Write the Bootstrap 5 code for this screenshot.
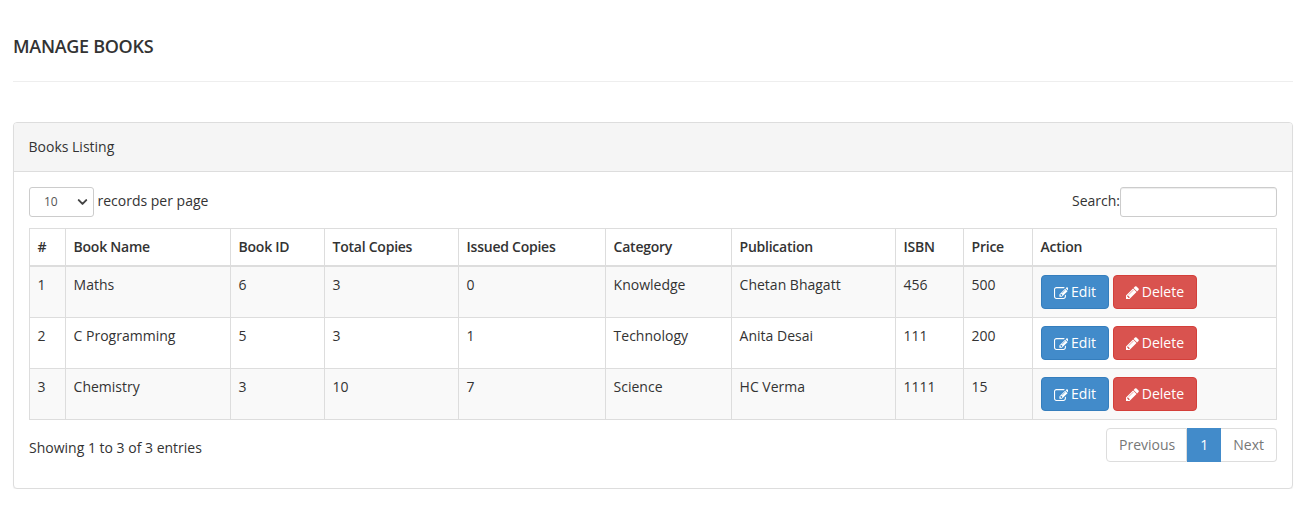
<!DOCTYPE html>
<html lang="en">
<head>
<meta charset="utf-8">
<title>Manage Books</title>
<link rel="stylesheet" href="https://cdn.jsdelivr.net/npm/bootstrap@5.3.0/dist/css/bootstrap.min.css">
<style>
body{font-family:"Open Sans",sans-serif;font-size:14px;line-height:20px;color:#333;background:#fff}
.page-wrap{padding:0 16px 0 13px}
.page-head{height:82px;border-bottom:1px solid #eee;margin:0 0 40px;display:flex;align-items:flex-start}
.page-head h1{font-size:18px;line-height:20px;font-weight:600;letter-spacing:-.3px;font-family:"Open Sans",sans-serif;margin:36px 0 0;color:#333}
.books-panel{border:1px solid #ddd;border-radius:4px;box-shadow:0 1px 1px rgba(0,0,0,.05);background:#fff}
.books-head{height:49px;padding:14px 14.5px;background:#f5f5f5;border-bottom:1px solid #ddd;border-radius:3px 3px 0 0}
.books-body{padding:15px 15px 26px}
.len-select{width:65px;height:30px;font-size:12px;line-height:18px;color:#555;padding:5px 10px 5px 14px;border:1px solid #ccc;border-radius:3px;background-image:url("data:image/svg+xml,%3csvg xmlns='http://www.w3.org/2000/svg' viewBox='0 0 16 16'%3e%3cpath fill='none' stroke='%23444' stroke-linecap='round' stroke-linejoin='round' stroke-width='3.2' d='m2 5 6 6 6-6'/%3e%3c/svg%3e");background-position:right 5px center;background-size:11px 10px}
.len-label{margin-left:3.5px;position:relative;top:-1px}
.search-label{position:relative;top:-1px}
.search-box{width:157px;height:30px;border:1px solid #ccc;border-radius:3px;padding:5px 10px;font-size:12px;box-shadow:inset 0 1px 1px rgba(0,0,0,.075)}
.tool-row{margin-bottom:11px}
.books-table{table-layout:fixed;width:100%;margin:0;border-color:#ddd;color:#333;--bs-table-striped-bg:#f9f9f9;--bs-table-striped-color:#333;--bs-table-color:#333;--bs-table-border-color:#ddd}
.books-table th{padding:8px 8px 8px 7.6px;font-weight:600;letter-spacing:-.25px;line-height:20px;border-bottom:2px solid #ddd;color:#333}
.books-table td{padding:8px 8px 8px 7.6px;line-height:20px;vertical-align:top;color:#333}
.books-table td.act-cell{padding-left:8px}
.books-table thead{border-bottom:0}
.books-table>tbody{border-top:0}
.c1{width:36px}.c2{width:165px}.c3{width:94px}.c4{width:134px}.c5{width:147px}.c6{width:126px}.c7{width:164px}.c8{width:68px}.c9{width:69px}
.act-btn{display:inline-flex;align-items:center;height:34px;padding:0 12px;font-size:14px;line-height:20px;color:#fff;border-radius:4px;border:1px solid;text-decoration:none}
.act-btn:hover{color:#fff}
.act-edit{background:#428bca;border-color:#357ebd;margin-right:4px}
.act-del{background:#d9534f;border-color:#d43f3a}
.act-btn svg{fill:#fff;height:13px;width:auto;margin-right:3px}
.pager-list{display:flex;list-style:none;margin:0;padding:0}
.pager-list a{display:block;height:34px;padding:6px 12px;border:1px solid #ddd;border-left:0;color:#777;background:#fff;text-decoration:none;line-height:20px}
.pager-list li:first-child a{border-left:1px solid #ddd;border-radius:4px 0 0 4px;padding:6px 11px 6px 12px}
.pager-list li:last-child a{border-radius:0 4px 4px 0}
.pager-list li.on a{background:#428bca;border-color:#428bca;color:#fff;padding:6px 12px 6px 13px}
.foot-row{margin-top:8px}
.info-text{padding-top:10px}
</style>
</head>
<body>
<div class="page-wrap">
  <div class="page-head"><h1>MANAGE BOOKS</h1></div>
  <div class="books-panel">
    <div class="books-head">Books Listing</div>
    <div class="books-body">
      <div class="d-flex justify-content-between align-items-center tool-row">
        <div class="d-flex align-items-center">
          <select class="form-select len-select"><option>10</option><option>25</option><option>50</option></select>
          <span class="len-label">records per page</span>
        </div>
        <div class="d-flex align-items-center">
          <label for="q" class="search-label">Search:</label>
          <input id="q" type="search" class="search-box">
        </div>
      </div>
      <table class="table table-bordered table-striped books-table">
        <colgroup><col class="c1"><col class="c2"><col class="c3"><col class="c4"><col class="c5"><col class="c6"><col class="c7"><col class="c8"><col class="c9"><col></colgroup>
        <thead>
          <tr><th>#</th><th>Book Name</th><th>Book ID</th><th>Total Copies</th><th>Issued Copies</th><th>Category</th><th>Publication</th><th>ISBN</th><th>Price</th><th>Action</th></tr>
        </thead>
        <tbody>
          <tr><td>1</td><td>Maths</td><td>6</td><td>3</td><td>0</td><td>Knowledge</td><td>Chetan Bhagatt</td><td>456</td><td>500</td>
            <td class="act-cell"><a href="#" class="act-btn act-edit"><svg viewBox="0 0 1664 1536"><path d="M888 1184l116-116-152-152-116 116v56h96v96h56zm440-720q-16-16-33 1L945 815q-17 17-1 33t33-1l350-350q17-17 1-33zm80 594v190q0 119-84.500 203.500T1120 1536H288q-119 0-203.500-84.500T0 1248V416q0-119 84.500-203.500T288 128h832q63 0 117 25 15 7 18 23 3 17-9 29l-49 49q-14 14-32 8-23-6-45-6H288q-66 0-113 47t-47 113v832q0 66 47 113t113 47h832q66 0 113-47t47-113V1122q0-13 9-22l64-64q15-15 35-7t20 29zm-96-738l288 288-672 672H640V992zm444 132l-92 92-288-288 92-92q28-28 68-28t68 28l152 152q28 28 28 68t-28 68z"/></svg>Edit</a><a href="#" class="act-btn act-del"><svg viewBox="0 0 1515 1536"><path d="M363 1408l91-91-235-235-91 91v107h128v128h107zm523-928q0-22-22-22-10 0-17 7L305 1007q-7 7-7 17 0 22 22 22 10 0 17-7l542-542q7-7 7-17zm-54-192l416 416-832 832H0v-416zm683 96q0 53-37 90l-166 166-416-416 166-165q36-38 90-38 53 0 91 38l235 234q37 39 37 91z"/></svg>Delete</a></td></tr>
          <tr><td>2</td><td>C Programming</td><td>5</td><td>3</td><td>1</td><td>Technology</td><td>Anita Desai</td><td>111</td><td>200</td>
            <td class="act-cell"><a href="#" class="act-btn act-edit"><svg viewBox="0 0 1664 1536"><path d="M888 1184l116-116-152-152-116 116v56h96v96h56zm440-720q-16-16-33 1L945 815q-17 17-1 33t33-1l350-350q17-17 1-33zm80 594v190q0 119-84.500 203.500T1120 1536H288q-119 0-203.500-84.500T0 1248V416q0-119 84.500-203.500T288 128h832q63 0 117 25 15 7 18 23 3 17-9 29l-49 49q-14 14-32 8-23-6-45-6H288q-66 0-113 47t-47 113v832q0 66 47 113t113 47h832q66 0 113-47t47-113V1122q0-13 9-22l64-64q15-15 35-7t20 29zm-96-738l288 288-672 672H640V992zm444 132l-92 92-288-288 92-92q28-28 68-28t68 28l152 152q28 28 28 68t-28 68z"/></svg>Edit</a><a href="#" class="act-btn act-del"><svg viewBox="0 0 1515 1536"><path d="M363 1408l91-91-235-235-91 91v107h128v128h107zm523-928q0-22-22-22-10 0-17 7L305 1007q-7 7-7 17 0 22 22 22 10 0 17-7l542-542q7-7 7-17zm-54-192l416 416-832 832H0v-416zm683 96q0 53-37 90l-166 166-416-416 166-165q36-38 90-38 53 0 91 38l235 234q37 39 37 91z"/></svg>Delete</a></td></tr>
          <tr><td>3</td><td>Chemistry</td><td>3</td><td>10</td><td>7</td><td>Science</td><td>HC Verma</td><td>1111</td><td>15</td>
            <td class="act-cell"><a href="#" class="act-btn act-edit"><svg viewBox="0 0 1664 1536"><path d="M888 1184l116-116-152-152-116 116v56h96v96h56zm440-720q-16-16-33 1L945 815q-17 17-1 33t33-1l350-350q17-17 1-33zm80 594v190q0 119-84.500 203.500T1120 1536H288q-119 0-203.500-84.500T0 1248V416q0-119 84.500-203.500T288 128h832q63 0 117 25 15 7 18 23 3 17-9 29l-49 49q-14 14-32 8-23-6-45-6H288q-66 0-113 47t-47 113v832q0 66 47 113t113 47h832q66 0 113-47t47-113V1122q0-13 9-22l64-64q15-15 35-7t20 29zm-96-738l288 288-672 672H640V992zm444 132l-92 92-288-288 92-92q28-28 68-28t68 28l152 152q28 28 28 68t-28 68z"/></svg>Edit</a><a href="#" class="act-btn act-del"><svg viewBox="0 0 1515 1536"><path d="M363 1408l91-91-235-235-91 91v107h128v128h107zm523-928q0-22-22-22-10 0-17 7L305 1007q-7 7-7 17 0 22 22 22 10 0 17-7l542-542q7-7 7-17zm-54-192l416 416-832 832H0v-416zm683 96q0 53-37 90l-166 166-416-416 166-165q36-38 90-38 53 0 91 38l235 234q37 39 37 91z"/></svg>Delete</a></td></tr>
        </tbody>
      </table>
      <div class="d-flex justify-content-between foot-row">
        <div class="info-text">Showing 1 to 3 of 3 entries</div>
        <ul class="pager-list">
          <li><a href="#">Previous</a></li>
          <li class="on"><a href="#">1</a></li>
          <li><a href="#">Next</a></li>
        </ul>
      </div>
    </div>
  </div>
</div>
<script src="https://cdn.jsdelivr.net/npm/bootstrap@5.3.0/dist/js/bootstrap.bundle.min.js"></script>
</body>
</html>
